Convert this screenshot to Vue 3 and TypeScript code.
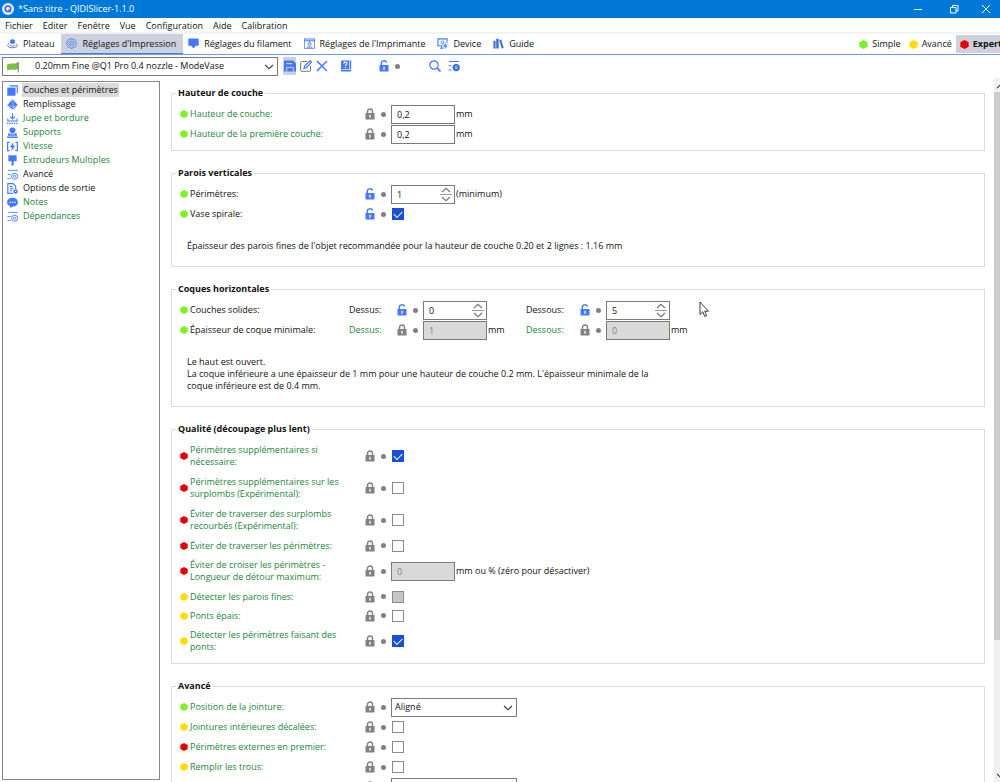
<script setup lang="ts">
import { ref } from 'vue'

type Mode = 'simple' | 'advanced' | 'expert'
interface Field {
  id: string
  kind: 'text' | 'spin' | 'check' | 'select'
  caption?: string
  system?: boolean
  unlocked?: boolean
  value?: string
  checked?: boolean
  disabled?: boolean
  unit?: string
}
interface Row {
  label: string
  mode?: Mode
  system?: boolean
  tall?: boolean
  fields: Field[]
}
interface Group {
  title: string
  dense?: boolean
  rows: Row[]
  note?: string[]
}

const menus = ['Fichier', 'Editer', 'Fenêtre', 'Vue', 'Configuration', 'Aide', 'Calibration']

const tabs = [
  { icon: 'plate', label: 'Plateau' },
  { icon: 'gear', label: "Réglages d'Impression" },
  { icon: 'filament', label: 'Réglages du filament' },
  { icon: 'printer', label: "Réglages de l'Imprimante" },
  { icon: 'device', label: 'Device' },
  { icon: 'guide', label: 'Guide' },
]
const activeTab = ref(1)

const modes: { key: Mode; label: string }[] = [
  { key: 'simple', label: 'Simple' },
  { key: 'advanced', label: 'Avancé' },
  { key: 'expert', label: 'Expert' },
]
const activeMode = ref<Mode>('expert')

const pages = [
  { icon: 'layers', label: 'Couches et périmètres', system: false },
  { icon: 'infill', label: 'Remplissage', system: false },
  { icon: 'skirt', label: 'Jupe et bordure', system: true },
  { icon: 'support', label: 'Supports', system: true },
  { icon: 'speed', label: 'Vitesse', system: true },
  { icon: 'funnel', label: 'Extrudeurs Multiples', system: true },
  { icon: 'wrench', label: 'Avancé', system: false },
  { icon: 'output', label: 'Options de sortie', system: false },
  { icon: 'note', label: 'Notes', system: true },
  { icon: 'wrench', label: 'Dépendances', system: true },
]
const activePage = ref(0)

const groups: Group[] = [
  {
    title: 'Hauteur de couche',
    rows: [
      { label: 'Hauteur de couche:', mode: 'simple', system: true, fields: [{ id: 'layer', kind: 'text', value: '0,2', unit: 'mm' }] },
      { label: 'Hauteur de la première couche:', mode: 'simple', system: true, fields: [{ id: 'first', kind: 'text', value: '0,2', unit: 'mm' }] },
    ],
  },
  {
    title: 'Parois verticales',
    rows: [
      { label: 'Périmètres:', mode: 'simple', fields: [{ id: 'perims', kind: 'spin', value: '1', unlocked: true, unit: '(minimum)' }] },
      { label: 'Vase spirale:', mode: 'simple', fields: [{ id: 'vase', kind: 'check', checked: true, unlocked: true }] },
    ],
    note: ["Épaisseur des parois fines de l'objet recommandée pour la hauteur de couche 0.20 et 2 lignes : 1.16 mm"],
  },
  {
    title: 'Coques horizontales',
    rows: [
      {
        label: 'Couches solides:',
        mode: 'simple',
        fields: [
          { id: 'top', kind: 'spin', caption: 'Dessus:', value: '0', unlocked: true },
          { id: 'bottom', kind: 'spin', caption: 'Dessous:', value: '5', unlocked: true },
        ],
      },
      {
        label: 'Épaisseur de coque minimale:',
        mode: 'simple',
        fields: [
          { id: 'topmin', kind: 'text', caption: 'Dessus:', system: true, value: '1', disabled: true, unit: 'mm' },
          { id: 'botmin', kind: 'text', caption: 'Dessous:', system: true, value: '0', disabled: true, unit: 'mm' },
        ],
      },
    ],
    note: [
      'Le haut est ouvert.',
      "La coque inférieure a une épaisseur de 1 mm pour une hauteur de couche 0.2 mm. L'épaisseur minimale de la",
      'coque inférieure est de 0.4 mm.',
    ],
  },
  {
    title: 'Qualité (découpage plus lent)',
    dense: true,
    rows: [
      { label: 'Périmètres supplémentaires si\nnécessaire:', mode: 'expert', system: true, tall: true, fields: [{ id: 'extra', kind: 'check', checked: true }] },
      { label: 'Périmètres supplémentaires sur les\nsurplombs (Expérimental):', mode: 'expert', system: true, tall: true, fields: [{ id: 'overhang', kind: 'check' }] },
      { label: 'Éviter de traverser des surplombs\nrecourbés (Expérimental):', mode: 'expert', system: true, tall: true, fields: [{ id: 'curled', kind: 'check' }] },
      { label: 'Éviter de traverser les périmètres:', mode: 'expert', system: true, fields: [{ id: 'cross', kind: 'check' }] },
      { label: 'Éviter de croiser les périmètres -\nLongueur de détour maximum:', mode: 'expert', system: true, tall: true, fields: [{ id: 'detour', kind: 'text', value: '0', disabled: true, unit: 'mm ou % (zéro pour désactiver)' }] },
      { label: 'Détecter les parois fines:', mode: 'advanced', system: true, fields: [{ id: 'thin', kind: 'check', disabled: true }] },
      { label: 'Ponts épais:', mode: 'advanced', system: true, fields: [{ id: 'thick', kind: 'check' }] },
      { label: 'Détecter les périmètres faisant des\nponts:', mode: 'advanced', system: true, tall: true, fields: [{ id: 'bridge', kind: 'check', checked: true }] },
    ],
  },
  {
    title: 'Avancé',
    rows: [
      { label: 'Position de la jointure:', mode: 'simple', system: true, fields: [{ id: 'seam', kind: 'select', value: 'Aligné' }] },
      { label: 'Jointures intérieures décalées:', mode: 'advanced', system: true, fields: [{ id: 'stagger', kind: 'check' }] },
      { label: 'Périmètres externes en premier:', mode: 'expert', system: true, fields: [{ id: 'external', kind: 'check' }] },
      { label: 'Remplir les trous:', mode: 'advanced', system: true, fields: [{ id: 'gaps', kind: 'check' }] },
      { label: '', system: true, fields: [{ id: 'generator', kind: 'select', value: '' }] },
    ],
  },
]
</script>

<template>
  <svg class="sprite" aria-hidden="true">
    <symbol id="i-plate" viewBox="0 0 12 12">
      <path d="M6 1 8.600 2.400v3L6 6.900 3.400 5.400v-3z" fill="#4479fb" />
      <path d="M2.600 6.300C.2 7.300.2 9 2.200 9.900c2.200 1 5.400 1 7.600 0 2-.9 2-2.600-.4-3.600M3.400 8.200c1.500.9 3.700.9 5.200 0" fill="none" stroke="#4a6cc0" />
    </symbol>
    <symbol id="i-gear" viewBox="0 0 12 12" fill="none" stroke="#4479fb">
      <path d="M5 .6h2l.3 1.300 1 .4L9.500 1.600l1.100 1.200-.7 1.100.4 1 1.200.3v1.700l-1.200.3-.4 1 .7 1.100-1.100 1.200-1.200-.7-1 .4L7 11.400H5l-.3-1.200-1-.4-1.200.7-1.100-1.200.7-1.100-.4-1L.5 6.900V5.200l1.200-.3.4-1-.7-1.100 1.100-1.200 1.200.7 1-.4z" stroke-width=".9" />
      <circle cx="6" cy="6" r="2.600" stroke-width=".8" /><circle cx="6" cy="6" r="1" stroke-width=".7" />
    </symbol>
    <symbol id="i-filament" viewBox="0 0 12 12">
      <path d="M1.300.5h9.400q1 0 1 1v6q0 1-1 1H8.500L6 11.500 3.500 8.500H1.300q-1 0-1-1v-6q0-1 1-1z" fill="#4479fb" />
    </symbol>
    <symbol id="i-printer" viewBox="0 0 12 12" fill="none" stroke="#4479fb">
      <path d="M.6 1V11.400h10.800V1" stroke="#6b82b6" stroke-width=".9" /><path d="M.2 1h11.600M.2 3h11.600" stroke-width="1.100" />
      <path d="M6 3v2M4.500 5.500h3v2L6 9 4.500 7.500zM3 10h6" />
    </symbol>
    <symbol id="i-device" viewBox="0 0 12 12" fill="none" stroke="#4479fb">
      <path d="M6 8.500H1V1h10v4M3 11.200h4M5 8.500V11" stroke-width="1.200" /><circle cx="6" cy="4.800" r="1.600" />
      <path d="M9 6v5.500M6.800 7.300l4.500 2.700M11.300 7.300 6.800 10" />
    </symbol>
    <symbol id="i-guide" viewBox="0 0 12 12" fill="#3c6ae0">
      <path d="M.5 3h2.300v8.500H.5zM3.500.8h2.700v10.700H3.500zM6.800 2.300l2.200-.7 2.700 9.200-2.200.7z" />
    </symbol>
    <symbol id="i-layers" viewBox="0 0 12 12">
      <path d="M3 1h8.200v8" fill="none" stroke="#4479fb" stroke-width="1.200" /><path d="M.3 2.800h9v8.900h-9z" fill="#4479fb" />
    </symbol>
    <symbol id="i-infill" viewBox="0 0 12 12">
      <path d="M6 .2 11.900 6.500 6.600 11.800.1 7.200z" fill="#4479fb" /><path d="M.5 7.300 7 8.800l4.600-2.300M7 8.800 6 .8M7 8.800v2.600" stroke="#dbe5ff" stroke-width=".6" fill="none" />
    </symbol>
    <symbol id="i-skirt" viewBox="0 0 12 12" fill="none" stroke="#4479fb">
      <path d="M6 .3V6M3.500 4 6 6.500 8.500 4M.9 6v2.800h10.200V6" stroke-width="1.200" /><path d="M0 11.300h12" stroke-width="1.200" stroke-dasharray="1.500 1" />
    </symbol>
    <symbol id="i-support" viewBox="0 0 12 12">
      <path d="M6 .6C8.400.6 9.700 2.200 9.300 4.200 9 5.500 8 6.400 7.500 7h-3C4 6.400 3 5.500 2.700 4.200 2.300 2.200 3.600.6 6 .6zM2 6l-1.200 3.500h10.400L10 6 8 8H4zM.2 10.300h11.600V12H.2z" fill="#4479fb" />
    </symbol>
    <symbol id="i-speed" viewBox="0 0 12 12">
      <path d="M2.800 1.500H.7v9h2.100M9.200 1.500h2.100v9H9.200" fill="none" stroke="#4479fb" stroke-width="1.300" /><path d="M7 1.200 3 6.900h2.400L4.800 10.800l4.200-5.700H6.600z" fill="#4479fb" />
    </symbol>
    <symbol id="i-funnel" viewBox="0 0 12 12" fill="#4479fb">
      <path d="M1.500.3h9v6.500H7.200V11.500H4.900V6.800H1.500z" />
    </symbol>
    <symbol id="i-wrench" viewBox="0 0 12 12" fill="none" stroke="#4479fb">
      <path d="M1 1.500h11M.5 6h3.500M.5 10.300h3.500" stroke-width=".9" /><circle cx="8.300" cy="7.900" r="3.300" stroke-width="1" /><circle cx="8.300" cy="7.900" r="1.200" stroke-width=".9" />
    </symbol>
    <symbol id="i-output" viewBox="0 0 12 12" fill="none" stroke="#4479fb">
      <path d="M6.300 11.300H.9V.7h5.800L9.500 3.500v3M3 4h3M3 6.200h4M3 8.400h2.500" stroke-width="1.200" /><circle cx="9.300" cy="9.200" r="1.600" stroke-width="1.700" />
    </symbol>
    <symbol id="i-note" viewBox="0 0 12 12">
      <path d="M6 .9c3.400 0 5.900 2.100 5.900 4.800S9.400 10.500 6 10.500L3.300 11.700 3 9.800C1.300 9 .1 7.500.1 5.700.1 3 2.600.9 6 .9z" fill="#4479fb" /><path d="M2.700 5.800h1.500M5.300 5.800h1.500M7.900 5.800h1.500" stroke="#fff" stroke-width="1.300" />
    </symbol>
    <symbol id="i-save" viewBox="0 0 12 12">
      <path d="M0 .5h9L12 3.500V11.500H0z" fill="#4479fb" /><path d="M2.500 3h5.500v1.200H2.500zM2.200 7h7.600v4.500H8.800V8H3.200v3.500h-1z" fill="#ced0dd" />
    </symbol>
    <symbol id="i-edit" viewBox="0 0 12 12" fill="none">
      <path d="M7 1.500H1.700q-1 0-1 1v7.800q0 1 1 1h7.800q1 0 1-1V6" stroke="#777" /><path d="M4 8.300 4.600 6 10 .7 11.500 2.200 6.200 7.600z" stroke="#4479fb" stroke-width="1.200" />
    </symbol>
    <symbol id="i-delete" viewBox="0 0 12 12">
      <path d="M1 1 11 11M11 1 1 11" stroke="#4479fb" stroke-width="1.500" />
    </symbol>
    <symbol id="i-help" viewBox="0 0 12 12">
      <path d="M2 .5h8.500q.7 0 .7.700v9.600q0 .7-.7.700H2q-1 0-1-1v-9q0-1 1-1z" fill="#4479fb" /><path d="M1.800 9.500h9.400M9.600.8v8.700" stroke="#fff" stroke-width=".7" /><path d="M3.800 3.600C3.900 1.500 7.200 1.700 6.900 3.700 6.700 4.700 5.400 4.700 5.400 6M5.400 7v1.200" stroke="#fff" stroke-width="1.100" fill="none" />
    </symbol>
    <symbol id="i-search" viewBox="0 0 12 12" fill="none" stroke="#4479fb">
      <circle cx="5" cy="5" r="4.200" stroke-width="1.200" /><path d="M8 8 11.500 11.500" stroke-width="1.700" />
    </symbol>
    <symbol id="i-compare" viewBox="0 0 12 12" fill="none" stroke="#4479fb">
      <path d="M1 1.500h10M.5 5.700h3M.5 10h3" /><circle cx="8.200" cy="7.600" r="2.500" stroke-width="2.200" stroke="#3c6ae0" /><path d="M7 7.600h2.500" />
    </symbol>
    <symbol id="i-lock" viewBox="0 0 10 12">
      <path d="M2.500 6V3.200C2.500.2 7.500.2 7.500 3.200V6" fill="none" stroke="currentColor" stroke-width="1.400" /><path d="M.5 5h9v6.500h-9z" fill="currentColor" /><path d="M5 6.800v3" stroke="#fff" stroke-width="1.300" />
    </symbol>
    <symbol id="i-unlock" viewBox="0 0 10 12">
      <path d="M2.300 6V3C2.300.2 7.200.1 7.500 2.700" fill="none" stroke="currentColor" stroke-width="1.400" /><path d="M.5 5h9v6.500h-9z" fill="currentColor" /><path d="M5 6.800v3" stroke="#fff" stroke-width="1.300" />
    </symbol>
    <symbol id="i-hex" viewBox="0 0 8 8"><path d="M4 0 7.700 2v4L4 8 .3 6V2z" fill="currentColor" /></symbol>
    <symbol id="i-down" viewBox="0 0 10 6"><path d="M1 1 5 4.600 9 1" fill="none" stroke="currentColor" stroke-width="1.200" /></symbol>
    <symbol id="i-up" viewBox="0 0 10 6"><path d="M1 5 5 1.400 9 5" fill="none" stroke="currentColor" stroke-width="1.200" /></symbol>
  </svg>

  <div class="window">
    <header class="titlebar">
      <svg class="logo" viewBox="0 0 12 12"><circle cx="6" cy="6" r="6" fill="#e4ecff" /><circle cx="6" cy="5.800" r="2.800" fill="none" stroke="#4a5fe0" stroke-width="1.500" /><path d="M6.500 6.500 9 9" stroke="#4a5fe0" stroke-width="1.300" /></svg>
      <span class="title">*Sans titre - QIDISlicer-1.1.0</span>
      <button aria-label="Réduire"><svg viewBox="0 0 10 10"><path d="M1 5.500h8" /></svg></button>
      <button aria-label="Restaurer"><svg viewBox="0 0 10 10"><path d="M1.500 3.500h5.500V9H1.500zM3.500 3.500v-2H9V7H7" /></svg></button>
      <button aria-label="Fermer"><svg viewBox="0 0 10 10"><path d="M1 1l8 8M9 1 1 9" /></svg></button>
    </header>

    <nav class="menubar"><button v-for="m in menus" :key="m">{{ m }}</button></nav>

    <div class="tabs">
      <button v-for="(t, i) in tabs" :key="t.label" class="tab" :class="{ active: i === activeTab }" @click="activeTab = i">
        <svg class="ico"><use :href="'#i-' + t.icon" /></svg>{{ t.label }}
      </button>
      <span class="spacer"></span>
      <button v-for="m in modes" :key="m.key" class="mode" :class="{ active: m.key === activeMode }" @click="activeMode = m.key">
        <svg class="modedot" :class="m.key"><use href="#i-hex" /></svg>{{ m.label }}
      </button>
    </div>

    <div class="toolbar">
      <div class="preset">
        <svg class="flag" viewBox="0 0 12 12"><path d="M0 3.500C4 1.500 7 3.500 11 1.500v6.500C7 10 4 7.500 0 9.500z" fill="#7cc242" /><path d="M11.300 1v10.500" stroke="#555" stroke-width=".8" /></svg>
        <select aria-label="Préréglage"><option>0.20mm Fine @Q1 Pro 0.4 nozzle - ModeVase</option></select>
        <svg class="chev"><use href="#i-down" /></svg>
      </div>
      <div class="tools">
        <button class="pressed" aria-label="Enregistrer"><svg class="ico"><use href="#i-save" /></svg></button>
        <button aria-label="Renommer"><svg class="ico"><use href="#i-edit" /></svg></button>
        <button aria-label="Supprimer"><svg class="ico"><use href="#i-delete" /></svg></button>
      </div>
      <button class="help" aria-label="Aide"><svg class="ico"><use href="#i-help" /></svg></button>
      <button class="reset unlocked" aria-label="Réinitialiser"><svg class="lock"><use href="#i-unlock" /></svg><i class="bullet"></i></button>
      <div class="tools find">
        <button aria-label="Rechercher"><svg class="ico"><use href="#i-search" /></svg></button>
        <button aria-label="Comparer"><svg class="ico"><use href="#i-compare" /></svg></button>
      </div>
    </div>

    <main class="body">
      <nav class="tree">
        <button v-for="(p, i) in pages" :key="p.label" :class="{ system: p.system, active: i === activePage }" @click="activePage = i">
          <svg class="ico"><use :href="'#i-' + p.icon" /></svg><span>{{ p.label }}</span>
        </button>
      </nav>

      <section class="content">
        <fieldset v-for="g in groups" :key="g.title" :class="{ dense: g.dense }">
          <legend>{{ g.title }}</legend>
          <div v-for="r in g.rows" :key="r.label" class="row" :class="{ tall: r.tall, multi: r.fields.length > 1 }">
            <span class="dotcell"><svg v-if="r.mode" class="dot" :class="r.mode"><use href="#i-hex" /></svg></span>
            <label class="label" :class="{ system: r.system }" :for="r.fields[0].id">{{ r.label }}</label>
            <div v-for="f in r.fields" :key="f.id" class="field">
              <label v-if="f.caption" class="caption" :class="{ system: f.system }" :for="f.id">{{ f.caption }}</label>
              <svg class="lock" :class="{ unlocked: f.unlocked }"><use :href="f.unlocked ? '#i-unlock' : '#i-lock'" /></svg>
              <i class="bullet"></i>
              <input v-if="f.kind === 'check'" :id="f.id" type="checkbox" :checked="f.checked" :disabled="f.disabled" />
              <div v-else-if="f.kind === 'select'" class="combo">
                <select :id="f.id" :aria-label="r.label || 'Générateur'"><option>{{ f.value }}</option></select>
                <svg class="chev"><use href="#i-down" /></svg>
              </div>
              <div v-else class="box" :class="{ off: f.disabled }">
                <input :id="f.id" type="text" :value="f.value" :disabled="f.disabled" />
                <span v-if="f.kind === 'spin'" class="spin">
                  <button aria-label="Augmenter"><svg><use href="#i-up" /></svg></button>
                  <button aria-label="Diminuer"><svg><use href="#i-down" /></svg></button>
                </span>
              </div>
              <span v-if="f.unit" class="unit">{{ f.unit }}</span>
            </div>
          </div>
          <p v-if="g.note"><template v-for="(n, i) in g.note" :key="n"><br v-if="i" />{{ n }}</template></p>
        </fieldset>
      </section>

      <div class="scrollbar">
        <svg><use href="#i-up" /></svg>
        <div class="track"><div class="thumb"></div></div>
        <svg><use href="#i-down" /></svg>
      </div>
    </main>

    <svg class="cursor" viewBox="0 0 10 17"><path d="M1 1v12.500l2.800-2.700 2 4.700 1.900-.8-2-4.500h3.700z" fill="#fff" stroke="#222" stroke-width=".9" /></svg>
  </div>
</template>

<style>
body { margin: 0; background: #fff; overflow: hidden; }
</style>

<style scoped>
* { box-sizing: border-box; }
button, input, select { font: inherit; color: inherit; margin: 0; padding: 0; border: 0; background: none; border-radius: 0; }
svg { display: block; flex: none; }
.sprite { position: absolute; width: 0; height: 0; }
.window { height: 100vh; display: flex; flex-direction: column; overflow: hidden; font: 9px/12px "Open Sans", "Noto Sans", sans-serif; color: #111; background: #fff; }
.ico { width: 11px; height: 11px; }
.titlebar { height: 18px; flex: none; background: #0078d7; color: #fff; display: flex; align-items: center; padding-left: 2px; }
.logo { width: 12px; height: 12px; margin-right: 4px; }
.title { flex: 1; }
.titlebar button { width: 36px; height: 18px; display: grid; place-items: center; }
.titlebar button:last-child { width: 28px; }
.titlebar button svg { width: 10px; height: 10px; fill: none; stroke: #fff; stroke-width: 1; }
.menubar { height: 16px; flex: none; display: flex; gap: 10px; padding: 0 5px; border-bottom: 2px solid #f3f3f3; }
.menubar button { height: 15px; }
.tabs { height: 21px; flex: none; display: flex; padding-left: 2px; border-bottom: 1px solid #6f96f8; overflow: hidden; white-space: nowrap; }
.tab { display: flex; align-items: center; gap: 5px; padding: 0 7px 0 5px; height: 20px; border-bottom: 1px solid transparent; }
.tab.active { background: #ced0dd; border-color: #4479fb; }
.spacer { flex: 1; }
.mode { display: flex; align-items: center; gap: 4px; padding: 0 4px; height: 18px; margin-top: 1px; }
.mode.active { background: #ced0dd; font-weight: 700; padding-right: 0; margin-right: -2px; }
.modedot { width: 9px; height: 9px; }
.simple { color: #7df028; }
.advanced { color: #ffdc00; }
.expert { color: #e70000; }
.toolbar { height: 26px; flex: none; display: flex; align-items: center; padding: 0 0 4px 2px; }
.preset, .combo { position: relative; height: 19px; border: 1px solid #7a7a7a; background: #fff; }
.preset { width: 276px; }
.preset select, .combo select { appearance: none; width: 100%; height: 17px; display: block; }
.preset select { padding-left: 32px; }
.flag { position: absolute; left: 4px; top: 3px; width: 12px; height: 12px; }
.chev { position: absolute; right: 3px; top: 6px; width: 10px; height: 6px; color: #444; pointer-events: none; }
.tools { display: flex; gap: 3px; margin-left: 5px; }
.tools button { display: grid; place-items: center; width: 13px; height: 18px; }
.tools .ico, .help .ico { width: 12px; height: 12px; }
.pressed { background: #ced0dd; }
.help { margin-left: 12px; }
.reset { display: flex; align-items: center; margin-left: 27px; }
.find { margin-left: 23px; gap: 6px; }
.lock { width: 10px; height: 12px; color: #808080; }
.unlocked, .unlocked .lock { color: #4479fb; }
.bullet { width: 5px; height: 5px; border-radius: 50%; background: #808080; margin: 0 5px 0 6px; flex: none; }
.body { flex: 1; min-height: 0; display: flex; }
.tree { width: 158px; flex: none; margin: 0 0 2px 2px; border: 1px solid #828790; padding: 1px 0 0 4px; }
.tree button { display: flex; align-items: center; height: 14px; gap: 4px; white-space: nowrap; }
.tree span { padding: 1px; }
.tree .active span { background: #d9d9d9; }
.system { color: #1c8437; }
.content { flex: 1; min-width: 0; padding: 6px 9px 0 11px; overflow: hidden; }
fieldset { margin: 0 0 16px; padding: 5px 8px 6px; border: 1px solid #dcdcdc; min-width: 0; }
legend { font-weight: 700; margin-left: -4px; padding: 0 2px; height: 12px; }
.row { display: flex; align-items: center; height: 20px; white-space: nowrap; }
.dense .row { height: 19px; }
.dense .tall { height: 32px; }
.dotcell { width: 10px; flex: none; }
.dot { width: 8px; height: 8px; }
.label { width: 175px; flex: none; white-space: pre; }
.multi .label { width: 159px; }
.field { display: flex; align-items: center; }
.multi .field { width: 177px; }
.caption { width: 48px; }
.multi .field + .field { width: auto; }
.field + .field .caption { width: 54px; }
.box { width: 64px; height: 19px; border: 1px solid #7a7a7a; display: flex; align-items: center; background: #fff; }
.box input { width: 100%; min-width: 0; height: 17px; padding-left: 5px; outline: 0; }
.off { background: #d9d9d9; color: #808080; }
.spin { width: 14px; flex: none; color: #777; }
.spin button { display: grid; place-items: center; height: 8px; width: 12px; }
.spin button + button { border-top: 1px solid #999; }
.spin svg { width: 10px; height: 6px; }
.unit { margin-left: 1px; }
input[type="checkbox"] { appearance: none; width: 12px; height: 12px; margin-left: 1px; border: 1px solid #8a8a8a; background: #fff; display: grid; place-items: center; }
input[type="checkbox"]:checked { background: #194fd2; border-color: #194fd2; }
input[type="checkbox"]:checked::after { content: ""; width: 7px; height: 4px; border-left: 1px solid #fff; border-bottom: 1px solid #fff; transform: translateY(-1px) rotate(-45deg); }
input[type="checkbox"]:disabled { background: #c6c6c6; }
.combo { width: 126px; }
.combo select { padding-left: 3px; }
p { margin: 16px 0 8px 7px; }
.scrollbar { width: 6px; flex: none; background: #f0f0f0; overflow: hidden; display: flex; flex-direction: column; margin-top: -3px; }
.scrollbar svg { width: 10px; height: 6px; margin: 5px 0 3px 2px; color: #444; }
.track { flex: 1; }
.thumb { height: 81%; background: #cdcdcd; }
.cursor { position: absolute; left: 699px; top: 301px; width: 10px; height: 17px; }
</style>
